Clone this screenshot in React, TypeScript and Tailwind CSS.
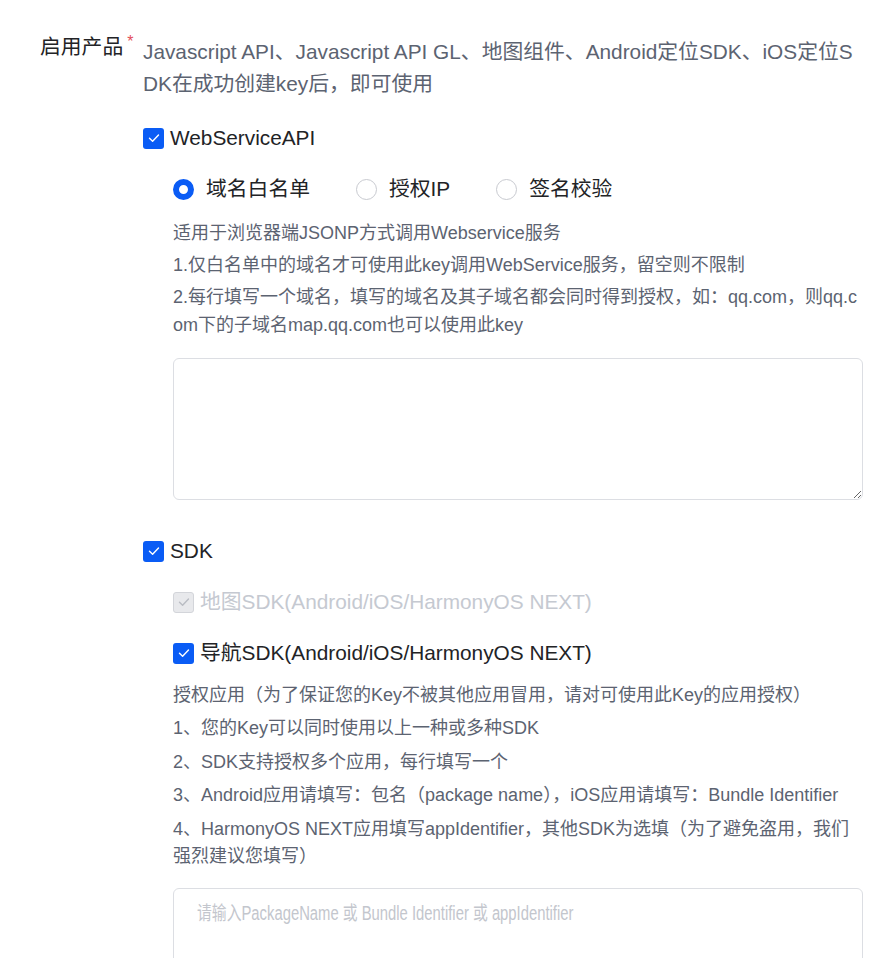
import React from "react";

const Check = ({ disabled = false }: { disabled?: boolean }) => (
  <span
    className={
      disabled
        ? "flex h-[21px] w-[21px] shrink-0 items-center justify-center rounded-[3px] border border-[#d3d5da] bg-[#e8e9ec]"
        : "flex h-[21px] w-[21px] shrink-0 items-center justify-center rounded-[3px] bg-[#0a5cf5]"
    }
  >
    <svg width="14" height="14" viewBox="0 0 14 14" fill="none">
      <polyline
        points="2.5,7.2 5.6,10.2 11.5,4"
        stroke={disabled ? "#b9bcc3" : "#ffffff"}
        strokeWidth="1.4"
        strokeLinecap="round"
        strokeLinejoin="round"
      />
    </svg>
  </span>
);

const CheckRow = ({
  label,
  disabled = false,
  className = "",
}: {
  label: string;
  disabled?: boolean;
  className?: string;
}) => (
  <div className={"flex h-[32px] items-center gap-[6px] " + className}>
    <Check disabled={disabled} />
    <span
      className={
        disabled
          ? "text-[20.8px] leading-[32px] text-[#c5c9d1]"
          : "text-[20.8px] leading-[32px] text-[#222326]"
      }
    >
      {label}
    </span>
  </div>
);

const Radio = ({ label, checked = false }: { label: string; checked?: boolean }) => (
  <div className="flex h-[32px] items-center gap-[12px]">
    <span
      className={
        checked
          ? "h-[21px] w-[21px] shrink-0 rounded-full border-[6px] border-[#0a5cf5] bg-white"
          : "h-[21px] w-[21px] shrink-0 rounded-full border border-[#c8cad0] bg-white"
      }
    />
    <span className="text-[20.8px] leading-[32px] text-[#222326]">{label}</span>
  </div>
);

export default function App() {
  return (
    <div className="h-[958px] w-[890px] overflow-hidden bg-white font-['Liberation_Sans','Noto_Sans_CJK_SC',sans-serif]">
      <div className="flex pt-[31px]">
        <div className="flex w-[143px] shrink-0 items-start pl-[40px]">
          <span className="text-[20.8px] leading-[32px] text-[#222326]">启用产品</span>
          <span className="ml-[4px] mt-[3px] text-[16px] leading-none text-[#e34d59]">*</span>
        </div>
        <div className="w-[720px] pt-[5px]">
          <p className="break-all text-[20.8px] leading-[32px] text-[#5c6371]">
            Javascript API、Javascript API GL、地图组件、Android定位SDK、iOS定位SDK在成功创建key后，即可使用
          </p>

          <CheckRow label="WebServiceAPI" className="mt-[22px]" />

          <div className="pl-[30px]">
            <div className="mt-[19px] flex items-center gap-[46px]">
              <Radio label="域名白名单" checked />
              <Radio label="授权IP" />
              <Radio label="签名校验" />
            </div>

            <div className="mt-[14px] w-[690px] break-all text-[18px] leading-[28px] text-[#5c6371]">
              <p className="mb-[4px]">适用于浏览器端JSONP方式调用Webservice服务</p>
              <p className="mb-[4px]">1.仅白名单中的域名才可使用此key调用WebService服务，留空则不限制</p>
              <p>2.每行填写一个域名，填写的域名及其子域名都会同时得到授权，如：qq.com，则qq.com下的子域名map.qq.com也可以使用此key</p>
            </div>

            <textarea className="mt-[19px] block h-[142px] w-[690px] resize-y rounded-[6px] border border-[#dcdee3] bg-white px-[23px] py-[10px] text-[18px] outline-none" />
          </div>

          <CheckRow label="SDK" className="mt-[35px]" />

          <div className="pl-[30px]">
            <CheckRow label="地图SDK(Android/iOS/HarmonyOS NEXT)" disabled className="mt-[19px]" />
            <CheckRow label="导航SDK(Android/iOS/HarmonyOS NEXT)" className="mt-[19px]" />

            <div className="mt-[12.5px] flex w-[690px] flex-col gap-[6.5px] break-all text-[18px] leading-[27px] text-[#5c6371]">
              <p>授权应用（为了保证您的Key不被其他应用冒用，请对可使用此Key的应用授权）</p>
              <p>1、您的Key可以同时使用以上一种或多种SDK</p>
              <p>2、SDK支持授权多个应用，每行填写一个</p>
              <p>3、Android应用请填写：包名（package name），iOS应用请填写：Bundle Identifier</p>
              <p>4、HarmonyOS NEXT应用填写appIdentifier，其他SDK为选填（为了避免盗用，我们强烈建议您填写）</p>
            </div>

            <div className="relative mt-[18.5px] w-[690px]">
              <textarea className="block h-[142px] w-[690px] resize-y rounded-[6px] border border-[#dcdee3] bg-white px-[23px] py-[10px] text-[18px] leading-[28px] outline-none" />
              <span className="pointer-events-none absolute left-[24px] top-[11px] origin-left scale-x-[0.76] whitespace-nowrap text-[19.5px] leading-[28px] text-[#c3c6cd]">
                请输入PackageName 或 Bundle Identifier 或 appIdentifier
              </span>
            </div>
          </div>
        </div>
      </div>
    </div>
  );
}
